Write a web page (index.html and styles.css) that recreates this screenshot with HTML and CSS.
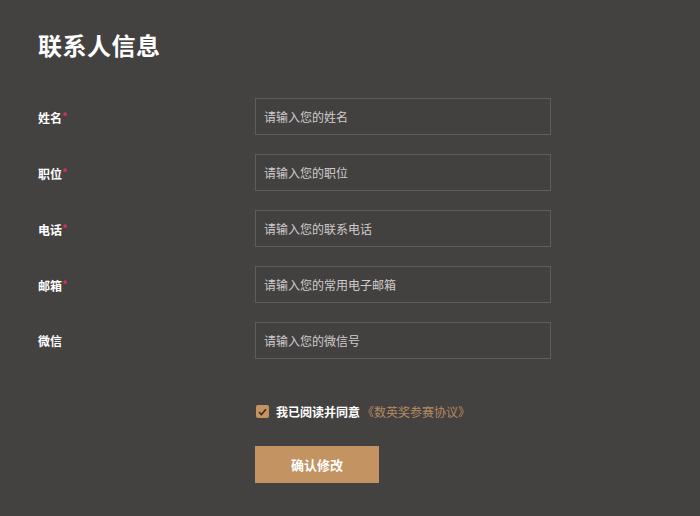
FILE: index.html
```html
<!DOCTYPE html>
<html lang="zh-CN">
<head>
    <meta charset="UTF-8">
    <meta name="viewport" content="width=device-width, initial-scale=1.0">
    <title>联系人信息</title>
    <link rel="stylesheet" href="styles.css">
</head>
<body>
    <div class="page">
        <h1 class="title">联系人信息</h1>

        <!-- 表单 -->
        <form class="form">
            <div class="row">
                <label class="label">姓名<span class="req">*</span></label>
                <input class="field" type="text" placeholder="请输入您的姓名">
            </div>
            <div class="row">
                <label class="label">职位<span class="req">*</span></label>
                <input class="field" type="text" placeholder="请输入您的职位">
            </div>
            <div class="row">
                <label class="label">电话<span class="req">*</span></label>
                <input class="field" type="text" placeholder="请输入您的联系电话">
            </div>
            <div class="row">
                <label class="label">邮箱<span class="req">*</span></label>
                <input class="field" type="text" placeholder="请输入您的常用电子邮箱">
            </div>
            <div class="row">
                <label class="label">微信</label>
                <input class="field" type="text" placeholder="请输入您的微信号">
            </div>

            <div class="agree">
                <span class="check">
                    <svg width="9" height="8" viewBox="0 0 9 8"><path d="M1 4.2 L3.4 6.5 L8 1.2" fill="none" stroke="#3d2f22" stroke-width="1.6"/></svg>
                </span>
                <span class="agree-text">我已阅读并同意</span>
                <a class="agree-link" href="#">《数英奖参赛协议》</a>
            </div>

            <div class="actions">
                <button class="submit-btn" type="button">确认修改</button>
            </div>
        </form>
    </div>
</body>
</html>
```

FILE: styles.css
```css
/* 页面基础样式 */
body {
    margin: 0;
    padding: 0;
    background: #444141;
    font-family: "Noto Sans CJK SC", "Liberation Sans", sans-serif;
    color: #fff;
}
.page {
    width: 700px;
    height: 516px;
    padding: 27px 0 0 38px;
    box-sizing: border-box;
}
.title {
    margin: 0;
    font-size: 24px;
    font-weight: bold;
    line-height: 36px;
    letter-spacing: 0.5px;
}
.form {
    margin-top: 35px;
}
.row {
    display: flex;
    align-items: center;
    height: 37px;
    margin-bottom: 19px;
}
.label {
    width: 217px;
    font-size: 12px;
    font-weight: bold;
}
.req {
    color: #d0365c;
    font-size: 11px;
    vertical-align: 2px;
}
.field {
    width: 296px;
    height: 37px;
    box-sizing: border-box;
    padding: 0 8px;
    background: #434040;
    border: 1px solid #5f5c5c;
    color: #ddd;
    font-family: inherit;
    font-size: 12px;
    outline: none;
}
.field::placeholder {
    color: #cfcccc;
}
/* 协议勾选 */
.agree {
    display: flex;
    align-items: center;
    margin: 44px 0 0 218px;
    font-size: 12px;
}
.check {
    display: flex;
    align-items: center;
    justify-content: center;
    width: 13px;
    height: 13px;
    border-radius: 2px;
    background: #c39462;
    margin-right: 7px;
}
.agree-text {
    font-weight: bold;
}
.agree-link {
    color: #b58b60;
    text-decoration: none;
    margin-left: 2px;
}
/* 提交按钮 */
.actions {
    margin: 26px 0 0 217px;
}
.submit-btn {
    width: 124px;
    height: 37px;
    border: none;
    background: #c39462;
    color: #fff;
    font-family: inherit;
    font-size: 13px;
    font-weight: bold;
    cursor: pointer;
}
```
